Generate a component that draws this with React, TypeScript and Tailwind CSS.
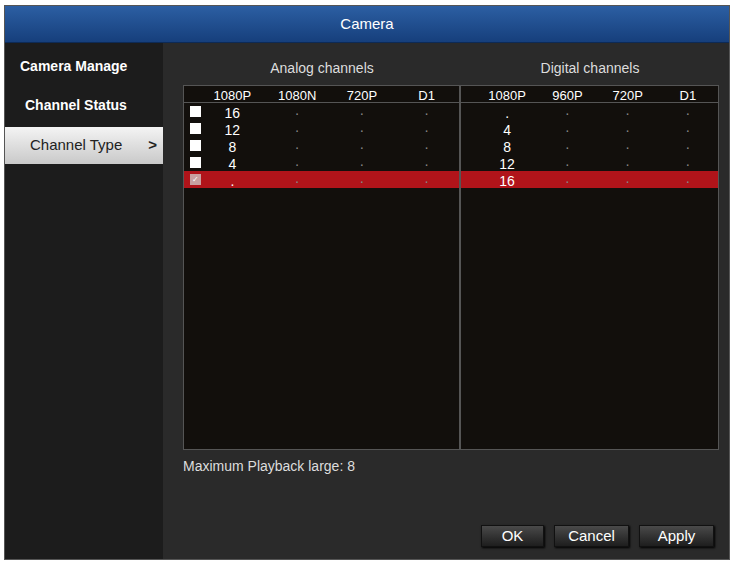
export default function App() {
  const F = { fontFamily: '"Liberation Sans", Arial, sans-serif' };
  const analog = ["16", "12", "8", "4", "."];
  const digital = [".", "4", "8", "12", "16"];
  const cell = "flex items-center justify-center";
  return (
    <div style={F} className="w-[734px] h-[562px] bg-white pt-[5px] pl-[4px] pr-[4px] pb-[2px]">
      <div className="w-full h-full flex flex-col bg-[#2a2a2a] border border-[#555]">
        <div className="h-[37px] flex items-center justify-center text-white text-[15px] bg-gradient-to-b from-[#2c5fa3] to-[#163f7c] border-b border-[#0d2a55]">
          Camera
        </div>
        <div className="flex flex-1">
          <div className="w-[158px] bg-[#1c1c1c] pt-[11px] flex flex-col text-white font-bold text-[14px]">
            <div className="h-[24px] pl-[15px] flex items-center">Camera Manage</div>
            <div className="h-[24px] pl-[20px] flex items-center mt-[15px]">Channel Status</div>
            <div className="h-[37px] mt-[10px] pl-[25px] pr-[6px] flex items-center justify-between bg-gradient-to-b from-[#f4f4f4] to-[#c9c9c9] text-[#222] font-normal text-[15px]">
              <span>Channel Type</span><span className="font-bold">&gt;</span>
            </div>
          </div>
          <div className="flex-1 pl-[20px] pr-[10px] flex flex-col text-white">
            <div className="flex h-[24px] mt-[12px] items-end text-[14px] text-[#ddd]">
              <div className="w-[278px] text-center">Analog channels</div>
              <div className="flex-1 text-center">Digital channels</div>
            </div>
            <div className="mt-[6px] h-[365px] bg-[#120f0c] border border-[#555] flex">
              {[0, 1].map((side) => (
                <div key={side} className={`flex flex-col ${side === 0 ? "w-[277px] border-r-2 border-[#555]" : "flex-1"}`}>
                  <div className="h-[17px] grid grid-cols-4 text-[13px] border-b border-[#555] pl-[16px]">
                    {(side === 0 ? ["1080P", "1080N", "720P", "D1"] : ["1080P", "960P", "720P", "D1"]).map((h, i) => (
                      <div key={i} className={cell}>{h}</div>
                    ))}
                  </div>
                  {[0, 1, 2, 3, 4].map((r) => (
                    <div key={r} className={`h-[17px] relative grid grid-cols-4 text-[14px] pl-[16px] ${r === 4 ? "bg-[#b0141a]" : ""}`}>
                      {side === 0 && (
                        <div className={`absolute left-[6px] top-[3px] w-[11px] h-[11px] ${r === 4 ? "bg-[#c8a0a0] text-[8px] text-white leading-[11px] text-center" : "bg-white"}`}>{r === 4 ? "✓" : ""}</div>
                      )}
                      <div className={cell}>{side === 0 ? analog[r] : digital[r]}</div>
                      <div className={`${cell} text-[#888]`}>·</div>
                      <div className={`${cell} text-[#888]`}>·</div>
                      <div className={`${cell} text-[#888]`}>·</div>
                    </div>
                  ))}
                </div>
              ))}
            </div>
            <div className="mt-[6px] text-[14px] text-[#ddd]">Maximum Playback large: 8</div>
            <div className="mt-[48px] flex justify-end gap-[10px] pr-[5px] text-[15px]">
              {[["OK", 63], ["Cancel", 75], ["Apply", 75]].map(([t, w]) => (
                <div key={t as string} style={{ width: w as number }} className="h-[22px] flex items-center justify-center bg-gradient-to-b from-[#4a4a4a] to-[#1e1e1e] border border-[#111] shadow-[1px_1px_2px_#000]">{t}</div>
              ))}
            </div>
          </div>
        </div>
      </div>
    </div>
  );
}
